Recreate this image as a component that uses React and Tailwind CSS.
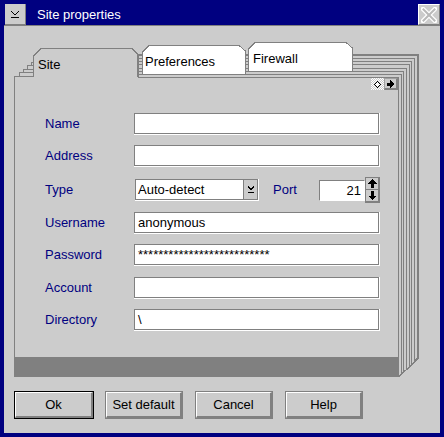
import React from "react";

const backPages = [
  { top: 74, right: 401 },
  { top: 71, right: 403 },
  { top: 68, right: 406 },
  { top: 64, right: 409 },
  { top: 61, right: 411 },
  { top: 58, right: 414 },
  { top: 54, right: 417, thick: true },
];

const siteSteps = [
  { x: 17, y: 14 },
  { x: 13, y: 17 },
  { x: 9, y: 21 },
  { x: 5, y: 24 },
  { x: 0, y: 28 },
];

const PageStack = () => (
  <svg
    className="absolute left-0 top-0"
    width="405"
    height="335"
    viewBox="14 42 405 335"
    shapeRendering="crispEdges"
  >
    {[...backPages].reverse().map((p) => {
      const bottom = 377 - 0.95 * (p.right - 398);
      return (
        <polygon
          key={p.right}
          points={`138,${p.top + 0.5} ${p.right + 0.5},${p.top + 0.5} ${p.right + 0.5},${bottom} 398.5,376.5 138,376.5`}
          fill="#cccccc"
          stroke="#808080"
          strokeWidth={p.thick ? 2 : 1}
        />
      );
    })}
  </svg>
);

const SiteTab = () => (
  <div className="relative w-[125px] h-[29px] mt-[6px] pl-[24px] pt-[9px] text-[13px] leading-[15px] text-black">
    <svg className="absolute left-0 top-0" width="125" height="29" shapeRendering="crispEdges">
      <path d="M19.5 29 V8 L27 0.5 H118 L124.5 7 V29" fill="none" stroke="#808080" />
      {siteSteps.map((s, i) => {
        const next = i < siteSteps.length - 1 ? siteSteps[i + 1].y : 29;
        return (
          <g key={i} stroke="#808080">
            <line x1={s.x} y1={s.y + 0.5} x2={19} y2={s.y + 0.5} />
            <line x1={s.x + 0.5} y1={s.y} x2={s.x + 0.5} y2={next} />
          </g>
        );
      })}
    </svg>
    <span className="relative">Site</span>
  </div>
);

const Tab = ({ label, width, className, pl }) => (
  <div className={`relative h-[29px] text-[13px] leading-[15px] text-black pt-[9px] ${className}`} style={{ width }}>
    <svg className="absolute left-0 top-0" width={width} height="29" shapeRendering="crispEdges">
      <path
        d={`M0.5 29 V7 L7 0.5 H${width - 7} L${width - 0.5} 6 V29 Z`}
        fill="#ffffff"
        stroke="none"
      />
      <path
        d={`M0.5 29 V7 L7 0.5 H${width - 7} L${width - 0.5} 6 V29`}
        fill="none"
        stroke="#808080"
      />
    </svg>
    <span className={`relative ${pl}`}>{label}</span>
  </div>
);

const Field = ({ value = "" }) => (
  <div className="w-[246px] h-[22px] border-r border-b border-white">
    <div className="w-[245px] h-[21px] border border-[#808080] bg-white pl-[3px] text-[13px] leading-[19px] text-black whitespace-nowrap overflow-hidden">
      {value}
    </div>
  </div>
);

const DropGlyph = ({ w = 8 }) => (
  <svg width={w + 2} height="9" shapeRendering="crispEdges">
    <polyline points={`1,1 ${w / 2 + 1},5 ${w + 1},1`} fill="none" stroke="#000" strokeWidth="1.3" />
    <line x1="1" y1="7.5" x2={w + 1} y2="7.5" stroke="#000" />
  </svg>
);

const Label = ({ children }) => (
  <div className="w-[89px] text-[13px] text-[#000080]">{children}</div>
);

const Row = ({ label, children, className }) => (
  <div className={`flex items-center h-[22px] ${className}`}>
    <Label>{label}</Label>
    {children}
  </div>
);

const Button = ({ children, isDefault, className }) => (
  <div
    className={`h-[28px] border ${isDefault ? "w-[80px] border-black" : "w-[78px] border-[#808080]"} ${className}`}
  >
    <div className="h-full border-t border-l border-white border-b-2 border-r-2 border-b-[#808080] border-r-[#808080] flex items-center justify-center text-[13px] text-black">
      {children}
    </div>
  </div>
);

export default function App() {
  return (
    <div className="w-[444px] h-[437px] border-4 border-[#000080] bg-[#cccccc] flex flex-col font-['Liberation_Sans',Arial,sans-serif] select-none">
      {/* title bar */}
      <div className="h-[21px] bg-[#000080] flex items-center">
        <div className="ml-[1px] w-[21px] h-[21px] bg-[#cccccc] border-r border-b border-[#808080] flex items-center justify-center">
          <DropGlyph w={8} />
        </div>
        <div className="ml-[11px] text-[13px] text-white leading-[21px]">Site properties</div>
        <div className="ml-auto w-[22px] h-[21px] bg-[#cccccc] border-l border-t border-white border-r border-b border-r-[#808080] border-b-[#808080] flex items-center justify-center">
          <svg width="16" height="16">
            <g stroke="#ffffff" strokeWidth="4.5" strokeLinecap="square">
              <line x1="2" y1="2" x2="14" y2="14" />
              <line x1="14" y1="2" x2="2" y2="14" />
            </g>
            <g stroke="#b8b8b8" strokeWidth="2" strokeLinecap="square">
              <line x1="2.5" y1="2.5" x2="13.5" y2="13.5" />
              <line x1="13.5" y1="2.5" x2="2.5" y2="13.5" />
            </g>
          </svg>
        </div>
      </div>
      <div className="h-px bg-[#808080]" />

      {/* body */}
      <div className="flex-1 pl-[10px]">
        {/* notebook */}
        <div className="relative mt-[16px] w-[405px] h-[335px]">
          <PageStack />
          <div className="relative flex items-start h-[35px]">
            <SiteTab />
            <Tab label="Preferences" width={104} className="ml-[3px] mt-[3px]" pl="pl-[3px]" />
            <Tab label="Firewall" width={105} className="ml-[2px]" pl="pl-[5px]" />
          </div>

          {/* page */}
          <div className="relative w-[385px] h-[300px] bg-[#cccccc] border-l border-r border-[#808080] flex flex-col">
            <div className="flex h-px">
              <div className="w-[123px]" />
              <div className="flex-1 bg-[#808080]" />
            </div>
            <div className="flex justify-end h-[12px]">
              <div className="w-[13px] h-[12px] bg-[repeating-conic-gradient(#ffffff_0%_25%,#cccccc_0%_50%)] bg-[length:2px_2px] flex items-center justify-center">
                <svg width="7" height="7" shapeRendering="crispEdges">
                  <polygon points="3.5,0.5 6.5,3.5 3.5,6.5 0.5,3.5" fill="#ffffff" stroke="#000" />
                </svg>
              </div>
              <div className="w-[14px] h-[12px] bg-[#cccccc] border-t border-l border-[#a0a0a0] border-r-2 border-b-2 border-r-[#808080] border-b-[#808080] flex items-center justify-center">
                <svg width="8" height="8" shapeRendering="crispEdges">
                  <polygon points="0,2.5 3,2.5 3,0 7,4 3,8 3,5.5 0,5.5" fill="#000" />
                </svg>
              </div>
            </div>

            <div className="flex-1 pl-[30px]">
              <Row label="Name" className="mt-[23px]">
                <Field />
              </Row>
              <Row label="Address" className="mt-[10px]">
                <Field />
              </Row>
              <Row label="Type" className="mt-[12px]">
                <div className="ml-px w-[124px] h-[22px] border-r border-b border-white">
                  <div className="h-[21px] border border-[#808080] bg-white flex">
                    <div className="flex-1 pl-[2px] text-[13px] leading-[19px] text-black">Auto-detect</div>
                    <div className="w-[14px] bg-[#cccccc] border-l border-[#808080] flex items-center justify-center">
                      <DropGlyph w={6} />
                    </div>
                  </div>
                </div>
                <div className="ml-[14px] w-[46px] text-[13px] text-[#000080]">Port</div>
                <div className="w-[46px] h-[21px] border border-[#808080] bg-white text-right pr-[3px] text-[13px] leading-[19px] text-black border-r-white border-b-white">
                  21
                </div>
                <div className="w-[15px] h-[26px] flex flex-col bg-[#cccccc] border border-[#808080] border-r-2 border-b-2">
                  <div className="h-1/2 flex items-center justify-center border-b border-[#808080]">
                    <svg width="9" height="9" shapeRendering="crispEdges">
                      <polygon points="4.5,0 9,4.5 6,4.5 6,9 3,9 3,4.5 0,4.5" fill="#000" />
                    </svg>
                  </div>
                  <div className="h-1/2 flex items-center justify-center">
                    <svg width="9" height="9" shapeRendering="crispEdges">
                      <polygon points="3,0 6,0 6,4.5 9,4.5 4.5,9 0,4.5 3,4.5" fill="#000" />
                    </svg>
                  </div>
                </div>
              </Row>
              <Row label="Username" className="mt-[11px]">
                <Field value="anonymous" />
              </Row>
              <Row label="Password" className="mt-[10px]">
                <Field value="**************************" />
              </Row>
              <Row label="Account" className="mt-[11px]">
                <Field />
              </Row>
              <Row label="Directory" className="mt-[10px]">
                <Field value="\" />
              </Row>
            </div>
            <div className="h-[20px] bg-[#808080] -mx-px" />
          </div>
        </div>

        {/* buttons */}
        <div className="flex mt-[14px]">
          <Button isDefault>Ok</Button>
          <Button className="ml-[11px]">Set default</Button>
          <Button className="ml-[12px]">Cancel</Button>
          <Button className="ml-[12px]">Help</Button>
        </div>
      </div>
    </div>
  );
}
